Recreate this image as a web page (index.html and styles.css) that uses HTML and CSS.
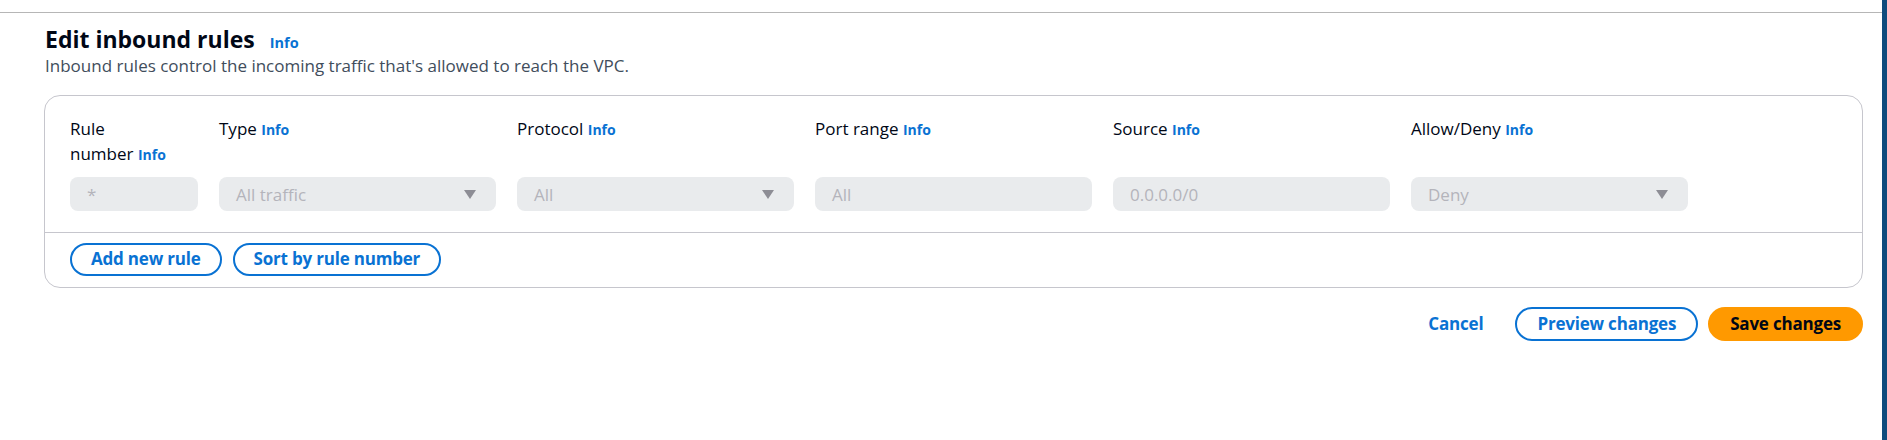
FILE: index.html
```html
<!DOCTYPE html>
<html lang="en">
<head>
<meta charset="utf-8">
<title>Edit inbound rules</title>
<link rel="stylesheet" href="styles.css">
</head>
<body>
<div class="page">
  <div class="main">
    <div class="topbar"></div>
    <div class="content">
      <h1 class="title">Edit inbound rules <a class="info info-lg">Info</a></h1>
      <p class="desc">Inbound rules control the incoming traffic that's allowed to reach the VPC.</p>

      <div class="panel">
        <div class="rules">
          <div class="col col-num">
            <div class="label">Rule<br>number <a class="info">Info</a></div>
            <div class="field">*</div>
          </div>
          <div class="col">
            <div class="label">Type <a class="info">Info</a></div>
            <div class="field select">All traffic
              <svg class="caret" width="12" height="9" viewBox="0 0 12 9"><polygon points="0,0 12,0 6,9" fill="#8d8d95"/></svg>
            </div>
          </div>
          <div class="col">
            <div class="label">Protocol <a class="info">Info</a></div>
            <div class="field select">All
              <svg class="caret" width="12" height="9" viewBox="0 0 12 9"><polygon points="0,0 12,0 6,9" fill="#8d8d95"/></svg>
            </div>
          </div>
          <div class="col">
            <div class="label">Port range <a class="info">Info</a></div>
            <div class="field">All</div>
          </div>
          <div class="col">
            <div class="label">Source <a class="info">Info</a></div>
            <div class="field">0.0.0.0/0</div>
          </div>
          <div class="col">
            <div class="label">Allow/Deny <a class="info">Info</a></div>
            <div class="field select">Deny
              <svg class="caret" width="12" height="9" viewBox="0 0 12 9"><polygon points="0,0 12,0 6,9" fill="#8d8d95"/></svg>
            </div>
          </div>
        </div>
        <div class="panel-actions">
          <button class="btn btn-outline btn-sm">Add new rule</button>
          <button class="btn btn-outline btn-sm">Sort by rule number</button>
        </div>
      </div>

      <div class="footer">
        <button class="btn btn-link">Cancel</button>
        <button class="btn btn-outline">Preview changes</button>
        <button class="btn btn-primary">Save changes</button>
      </div>
    </div>
  </div>
  <div class="stripe"></div>
</div>
</body>
</html>
```

FILE: styles.css
```css
html, body {
  margin: 0;
  padding: 0;
  background: #ffffff;
}

body {
  font-family: "Open Sans", "Noto Sans", sans-serif;
  color: #000716;
}

.page {
  display: flex;
  height: 440px;
}

.main {
  flex: 1;
  min-width: 0;
}

.stripe {
  width: 5px;
  background: #0f4b7d;
}

.topbar {
  height: 12px;
  border-bottom: 1px solid #b6b6b6;
}

.content {
  padding: 0 19px 0 44px;
}

.title {
  margin: 12px 0 0 1px;
  font-size: 23px;
  line-height: 28px;
  font-weight: 700;
}

.info {
  color: #0972d3;
  font-weight: 700;
  font-size: 14px;
  line-height: 1;
  text-decoration: none;
}

.info-lg {
  margin-left: 9px;
  font-size: 14.5px;
}

.desc {
  margin: 2px 0 0 1px;
  font-size: 17px;
  line-height: 22px;
  color: #414d5c;
}

.panel {
  margin-top: 18px;
  border: 1px solid #c6c6cd;
  border-radius: 16px;
}

.rules {
  display: flex;
  gap: 21px;
  padding: 20px 26px 21px 25px;
  border-bottom: 1px solid #c6c6cd;
}

.col {
  width: 277px;
  display: flex;
  flex-direction: column;
  gap: 11px;
}

.col-num {
  width: 128px;
}

.label {
  height: 50px;
  font-size: 17px;
  line-height: 25px;
}

.field {
  height: 34px;
  box-sizing: border-box;
  background: #e9ebed;
  border-radius: 8px;
  padding: 0 17px;
  display: flex;
  align-items: center;
  justify-content: space-between;
  font-size: 17px;
  color: #b4b4bb;
}

.caret {
  margin-right: 3px;
}

.panel-actions {
  display: flex;
  gap: 11px;
  padding: 10px 25px 11px;
}

.btn {
  font-family: inherit;
  font-weight: 700;
  font-size: 17px;
  line-height: 20px;
  border-radius: 20px;
  border: 2px solid transparent;
  padding: 5px 20px;
  background: transparent;
  cursor: pointer;
  letter-spacing: -0.2px;
}

.btn-sm {
  padding: 4px 19px 5px;
}

.btn-outline {
  border-color: #0972d3;
  color: #0972d3;
  background: #ffffff;
}

.btn-link {
  color: #0972d3;
}

.btn-primary {
  background: #ff9900;
  border-color: #ff9900;
  color: #000716;
}

.footer {
  display: flex;
  justify-content: flex-end;
  gap: 10px;
  margin-top: 19px;
}
```
